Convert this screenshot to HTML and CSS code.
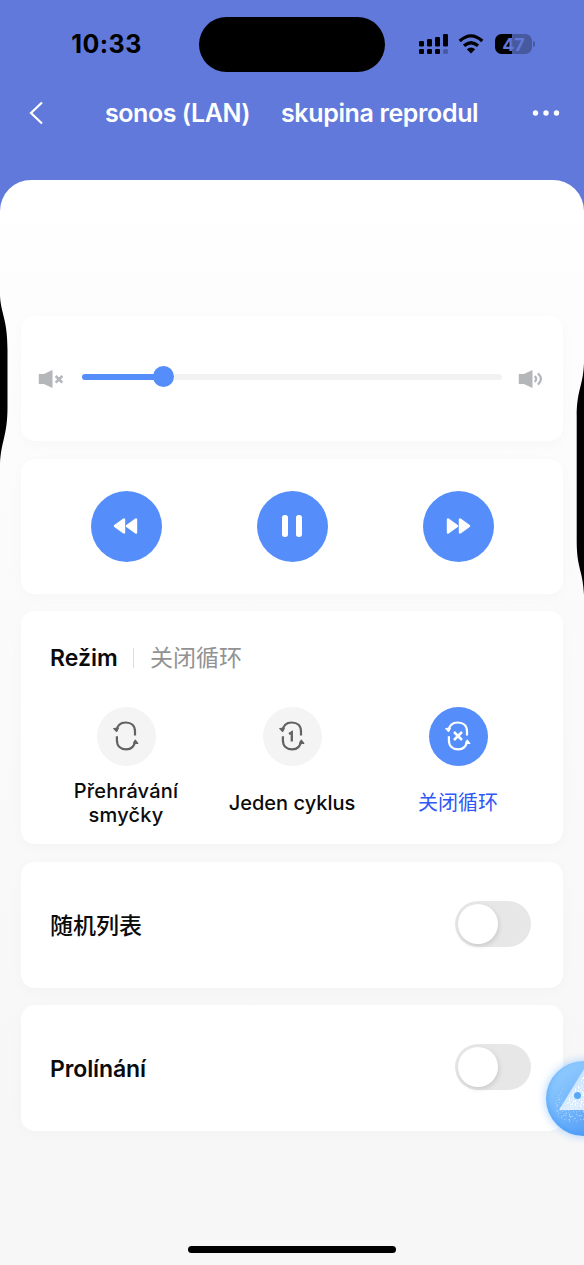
FILE: index.html
```html
<!DOCTYPE html>
<html lang="cs">
<head>
<meta charset="utf-8">
<title>sonos (LAN)</title>
<link rel="stylesheet" href="styles.css">
</head>
<body>
<svg class="defs" width="0" height="0" aria-hidden="true">
  <symbol id="speaker" viewBox="0 0 26 20"><path d="M.8 5h5l8.700-4v18l-8.700-4h-5z" fill="#b5b6ba"/></symbol>
  <symbol id="rewind" viewBox="0 0 26 20"><path d="M3 10 12 3.600v12.800zM15 10l9-6.500v13z" fill="#fff" stroke="#fff" stroke-width="2.400" stroke-linejoin="round"/></symbol>
  <symbol id="cycle" viewBox="0 0 30 32"><path d="M5.500 11.200C6 6 9.300 2.500 14.800 2.500c5.600 0 9.200 3.300 9.200 9v4M5.900 16.300v4c0 5.700 3.600 9 9.200 9 5.300 0 8.400-3.300 9-8.500" fill="none" stroke="currentColor" stroke-width="2.200"/><path d="m2.800 8.600 2.700 2.800 1.800-3.200zM22.700 23.300l1.500-3.100 2.600 3.100z" fill="currentColor" stroke="currentColor" stroke-width="1.300" stroke-linejoin="round"/></symbol>
</svg>
<div class="screen">
  <header class="header">
    <div class="status">
      <div class="clock">10:33</div>
      <div class="island"></div>
      <div class="indicators">
        <svg width="30" height="22" viewBox="0 0 30 22"><g><rect x="1" y="8" width="5" height="5.500" rx="1.300"/><rect x="9" y="6" width="5" height="7.500" rx="1.300"/><rect x="17" y="4" width="5" height="9.500" rx="1.300"/><rect x="25" y="1" width="5" height="12.500" rx="1.300"/><rect x="1" y="16" width="5" height="5" rx="1.300"/><rect x="9" y="16" width="5" height="5" rx="1.300"/><rect x="17" y="16" width="5" height="5" rx="1.300"/></g><rect x="25" y="16" width="5" height="5" rx="1.500" opacity=".25"/></svg>
        <svg class="wifi" width="26" height="20" viewBox="0 0 26 20"><path d="M1.700 7Q13-3.200 24.300 7M6 11.800q7-6.100 14 0" fill="none" stroke="#000" stroke-width="3.300"/><path d="M8.800 15.300q4.200-3.600 8.400 0L13 19.600z"/></svg>
        <div class="battery"><div class="battery-body">47</div><div class="battery-tip"></div></div>
      </div>
    </div>
    <nav class="nav">
      <svg class="back" width="18" height="26" viewBox="0 0 18 26"><path d="M15 2.500 4 13l11 10.500" fill="none" stroke="#fff" stroke-width="2.200"/></svg>
      <h1 class="title"><span class="title-device">sonos (LAN)</span><span class="title-group">skupina reprodul</span></h1>
      <svg class="more" width="28" height="8" viewBox="0 0 28 8" fill="#fff"><circle cx="3.500" cy="4" r="2.700"/><circle cx="14" cy="4" r="2.700"/><circle cx="24.500" cy="4" r="2.700"/></svg>
    </nav>
  </header>
  <main class="sheet">
    <section class="card volume">
      <svg width="26" height="20" viewBox="0 0 26 20"><use href="#speaker"/><path d="m17.700 7 6.600 6.600m0-6.600-6.600 6.600" stroke="#b5b6ba" stroke-width="2.600"/></svg>
      <div class="slider"><div class="slider-fill"></div><div class="slider-thumb"></div></div>
      <svg width="26" height="20" viewBox="0 0 26 20"><use href="#speaker"/><path d="M16.700 7.200q3 2.800 0 5.600M19.900 4.400q6 5.600 0 11.200" fill="none" stroke="#b5b6ba" stroke-width="2.300"/></svg>
    </section>
    <section class="card player">
      <div class="control"><svg class="skip" width="26" height="20"><use href="#rewind"/></svg></div>
      <div class="control"><svg width="22" height="24" viewBox="0 0 22 24" fill="#fff"><rect x="1" y="1" width="6" height="22" rx="2.700"/><rect x="15" y="1" width="6" height="22" rx="2.700"/></svg></div>
      <div class="control"><svg class="skip forward" width="26" height="20"><use href="#rewind"/></svg></div>
    </section>
    <section class="card mode">
      <div class="mode-head"><span class="mode-title">Režim</span><span class="divider"></span><span class="mode-value">关闭循环</span></div>
      <div class="mode-list">
        <div class="option"><div class="disc"><svg width="30" height="32"><use href="#cycle"/></svg></div><div class="label"><span class="label-loop">Přehrávání<br>smyčky</span></div></div>
        <div class="option"><div class="disc"><svg width="30" height="32" viewBox="0 0 30 32"><use href="#cycle"/><path d="m12 14 2.800-1.700v9.200" fill="none" stroke="currentColor" stroke-width="2.300"/></svg></div><div class="label"><span class="label-one">Jeden cyklus</span></div></div>
        <div class="option active"><div class="disc"><svg width="30" height="32" viewBox="0 0 30 32"><use href="#cycle"/><path d="m11 12 8 8m0-8-8 8" stroke="currentColor" stroke-width="2.500"/></svg></div><div class="label">关闭循环</div></div>
      </div>
    </section>
    <section class="card setting"><span class="setting-cn">随机列表</span><div class="switch"><div class="knob"></div></div></section>
    <section class="card setting"><span class="setting-fade">Prolínání</span><div class="switch"><div class="knob"></div></div></section>
    <div class="home-bar"></div>
  </main>
  <svg class="edge edge-left" width="8" height="168" viewBox="0 0 8 168"><path d="M0 0C1 18 7.500 23 7.500 54v57C7.500 140 1 145 0 168z"/></svg>
  <svg class="edge edge-right" width="8" height="232" viewBox="0 0 8 232"><path d="M8 0C7 24 .7 26 .7 54v124C.7 206 7 207 8 232z"/></svg>
  <div class="assistant">
    <svg width="38" height="74" viewBox="0 0 38 74">
      <defs>
        <linearGradient id="wing" x2=".3" y2="1"><stop stop-color="#d4ebff"/><stop offset="1" stop-color="#fff"/></linearGradient>
        <filter id="grain"><feTurbulence type="fractalNoise" baseFrequency=".65" numOctaves="2" seed="4"/><feColorMatrix values="0 0 0 0 1 0 0 0 0 1 0 0 0 0 1 9 0 0 0 -5"/><feComposite in2="SourceGraphic" operator="in"/></filter>
      </defs>
      <path d="M17 26 9 42l3 14 12 5h14V48H15z" fill="#fff" filter="url(#grain)" opacity=".35"/>
      <path d="M13 49 38 8v41z" fill="url(#wing)" opacity=".75"/>
      <path d="M17 46 38 14v33z" fill="#fff" filter="url(#grain)"/>
      <circle cx="31.500" cy="34.500" r="3.500" fill="#58a9f5"/>
    </svg>
  </div>
</div>
</body>
</html>
```
FILE: styles.css
```css
* { box-sizing: border-box; }
body { margin: 0; font-family: Inter, "Noto Sans CJK SC", sans-serif; color: #0b0b0c; }
.defs { position: absolute; }
.screen { position: relative; width: 584px; height: 1265px; overflow: hidden; background: #6179db; }
.header { height: 180px; }
.status { height: 88px; display: grid; grid-template-columns: 199px 186px 199px; align-items: center; }
.clock { padding-left: 14px; text-align: center; font-size: 25px; line-height: 30px; font-weight: 700; color: #000; letter-spacing: .45px; }
.island { height: 55px; border-radius: 28px; background: #000; }
.indicators { display: flex; align-items: center; padding: 0 0 1px 33px; }
.wifi { margin-left: 10px; }
.battery { display: flex; align-items: center; gap: 1px; margin-left: 11px; }
.battery-body { width: 37px; height: 20px; border-radius: 6.500px; background: linear-gradient(90deg, #000 47%, #475a9e 47%); color: #6179db; font-size: 18px; line-height: 21px; font-weight: 700; text-align: center; }
.battery-tip { width: 2px; height: 6px; border-radius: 0 2px 2px 0; background: #475a9e; }
.nav { height: 50px; display: flex; align-items: center; padding: 0 24px 0 27px; color: #fff; }
.title { display: flex; gap: 31px; margin: 0 auto 0 60px; font-size: 25px; line-height: 32px; font-weight: 600; white-space: nowrap; }
.title-device { width: 145px; letter-spacing: -.45px; }
.title-group { width: 199px; letter-spacing: -.37px; }
.sheet { height: 1085px; display: flex; flex-direction: column; gap: 17.500px; padding: 136px 21px 12px; border-radius: 31px 31px 0 0; background: linear-gradient(#fff 0, #fdfdfd 12%, #fafafa 45%, #f7f7f7 85%); }
.card { flex-shrink: 0; border-radius: 14px; background: #fff; box-shadow: 0 3px 14px rgba(0, 0, 0, .025); }
.volume { height: 125px; display: flex; align-items: center; padding: 0 19px 0 17px; }
.slider { position: relative; flex: 1; height: 6px; margin: 0 16px 4px 18px; border-radius: 3px; background: #f2f2f3; }
.slider-fill { width: 19.500%; height: 6px; border-radius: 3px; background: #558efa; }
.slider-thumb { position: absolute; left: 71px; top: -8px; width: 21px; height: 21px; border-radius: 50%; background: #558efa; }
.player { height: 135px; display: grid; grid-template-columns: repeat(3, 166px); justify-content: center; align-items: center; justify-items: center; }
.control { width: 71px; height: 71px; border-radius: 50%; background: #558efa; display: flex; align-items: center; justify-content: center; }
.skip { margin-right: 3px; }
.forward { margin: 0 0 0 2px; transform: scaleX(-1); }
.mode { height: 233px; padding-top: 31.500px; }
.mode-head { display: flex; align-items: center; height: 30px; padding-left: 29px; font-size: 23px; font-weight: 600; line-height: 30px; }
.mode-title { width: 68px; white-space: nowrap; }
.divider { width: 1px; height: 20px; margin: 0 16px 0 15px; background: #dcdcdc; }
.mode-value { color: #929292; font-weight: 400; }
.mode-list { display: grid; grid-template-columns: repeat(3, 166px); justify-content: center; padding-top: 34px; }
.option { display: flex; flex-direction: column; align-items: center; color: #0b0b0c; }
.disc { width: 59px; height: 59px; border-radius: 50%; background: #f4f4f4; color: #626262; display: flex; align-items: center; justify-content: center; }
.label { height: 50px; margin-top: 12px; display: flex; align-items: center; text-align: center; font-size: 20px; line-height: 24px; font-weight: 500; white-space: nowrap; }
.label-loop { letter-spacing: .2px; }
.active { color: #2f58f5; }
.active .label { font-weight: 400; padding-top: 1px; }
.active .disc { background: #558efa; color: #fff; }
.setting { height: 126px; display: flex; align-items: center; justify-content: space-between; padding: 0 32px 0 29px; font-size: 23px; line-height: 30px; font-weight: 600; }
.setting-cn { padding-top: 3px; font-weight: 500; }
.setting-fade { padding-top: 1px; letter-spacing: -.1px; }
.switch { width: 76px; height: 46px; margin-bottom: 2px; padding: 3px; border-radius: 23px; background: #e7e7e8; }
.knob { width: 40px; height: 40px; border-radius: 50%; background: #fff; box-shadow: 1px 2px 5px rgba(0, 0, 0, .13); }
.home-bar { flex-shrink: 0; width: 208px; height: 7px; margin: auto auto 0; border-radius: 4px; background: #000; }
.edge { position: absolute; }
.edge-left { left: 0; top: 296px; }
.edge-right { right: 0; top: 363px; }
.assistant { position: absolute; left: 546px; top: 1061px; width: 76px; height: 75px; border-radius: 50%; background: linear-gradient(145deg, #92ccff 12%, #73b6fb 48%, #4c97f5 90%); box-shadow: 0 0 10px rgba(70, 157, 255, .48), inset 2px -2px 5px rgba(55, 150, 255, .45); }
```
